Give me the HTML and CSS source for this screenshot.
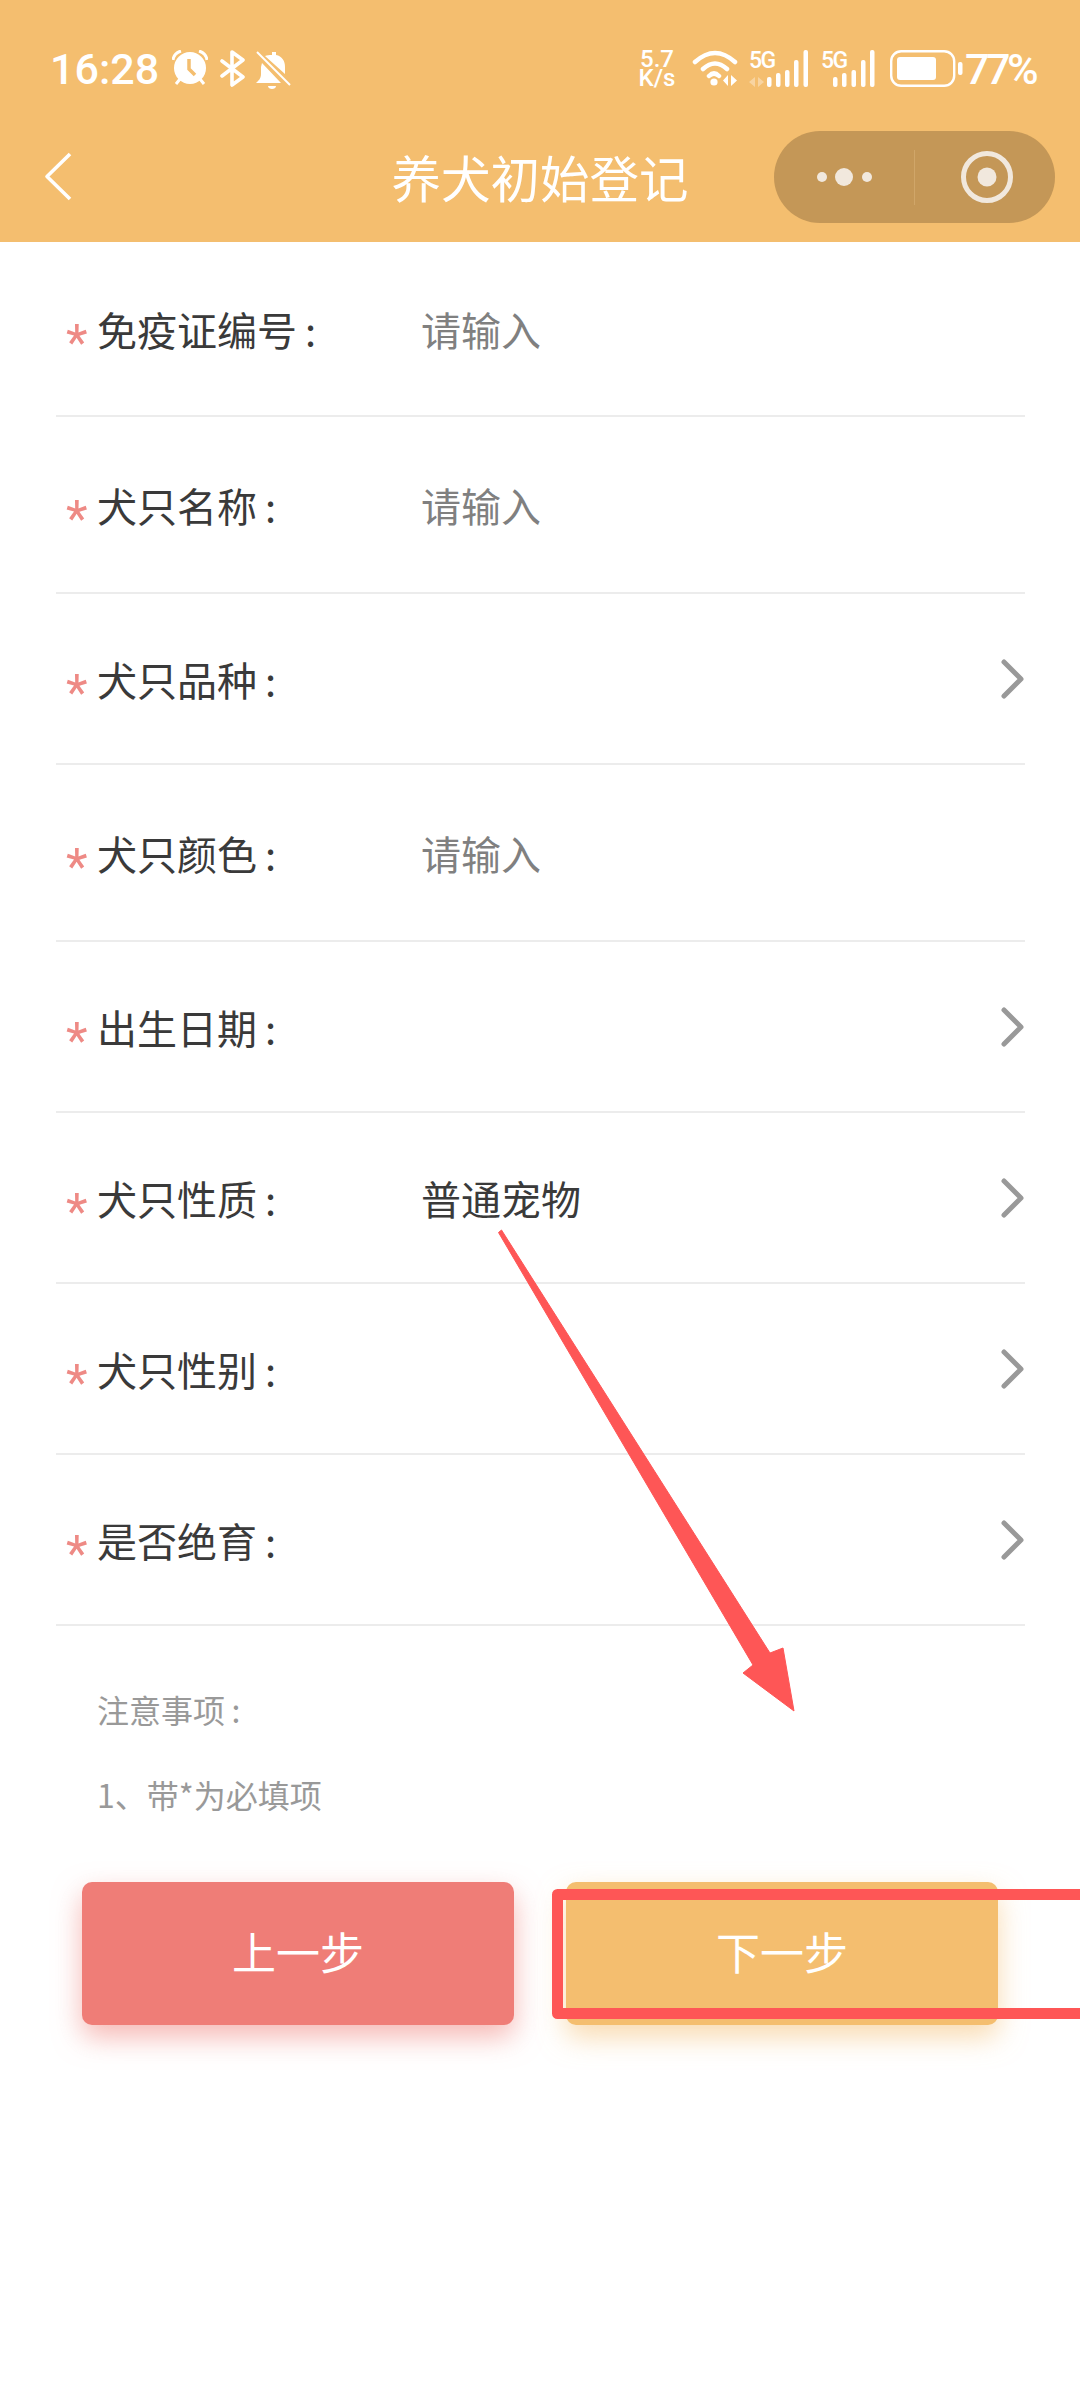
FILE: index.html
```html
<!DOCTYPE html>
<html lang="zh-CN">
<head>
    <meta charset="UTF-8">
    <meta name="viewport" content="width=device-width, initial-scale=1.0">
    <title>养犬初始登记</title>
    <link rel="stylesheet" href="styles.css">
</head>
<body>
    <header class="header">
        <div class="status-bar">
            <div class="status-left">
                <span class="time">16:28</span>
                <svg class="icon-alarm" width="36" height="36" viewBox="0 0 36 36">
                    <circle cx="18" cy="18" r="16" fill="#fff"/>
                    <path d="M17 9v10l6 6" fill="none" stroke="#f4be6f" stroke-width="3.5"/>
                    <path d="M1 10Q2 3 9 1M27 1Q34 3 35 10" fill="none" stroke="#fff" stroke-width="3"/>
                    <path d="M8 29l-4 5M28 29l4 5" stroke="#fff" stroke-width="3"/>
                </svg>
                <svg class="icon-bt" width="25" height="37" viewBox="0 0 25 37">
                    <path d="M2 11L23 27L12 35V2L23 10L2 26" fill="none" stroke="#fff" stroke-width="3.6" stroke-linejoin="round" stroke-linecap="round"/>
                </svg>
                <svg class="icon-bell" width="35" height="40" viewBox="0 0 35 40">
                    <path d="M16 2h4v3c6 1 9 6 9 12v7L9 6c2-1 4-1 7-1zM6 13l19 20H0c2-2 5-4 5-9v-7z" fill="#fff"/>
                    <path d="M12 36h8c0 4-8 4-8 0z" fill="#fff"/>
                    <path d="M1 2l33 33" stroke="#fff" stroke-width="2"/>
                </svg>
            </div>
            <div class="status-right">
                <div class="net-speed"><span>5.7</span><span>K/s</span></div>
                <svg class="icon-wifi" width="46" height="37" viewBox="0 0 46 37">
                    <path d="M3 12Q23 -6 43 12M11 19Q23 8 35 19M17 26Q22 21 27 26" fill="none" stroke="#fff" stroke-width="4.5" stroke-linecap="round"/>
                    <circle cx="22" cy="32" r="3.6" fill="#fff"/>
                    <path d="M36 25v11l-5-5.500zM39 25v11l6-5.500z" fill="#fff"/>
                </svg>
                <svg class="icon-sim icon-sim-one" width="60" height="45" viewBox="0 -8 60 45">
                    <text class="sim-label" x="0" y="18">5G</text>
                    <path d="M6 27v10l-6-5zM9 27v10l6-5z" fill="#fff" opacity="0.35"/>
                    <rect x="18" y="27" width="4.500" height="10" rx="2" fill="#fff"/>
                    <rect x="27" y="23" width="4.500" height="14" rx="2" fill="#fff"/>
                    <rect x="36" y="20" width="4.500" height="17" rx="2" fill="#fff"/>
                    <rect x="45" y="10" width="4.500" height="27" rx="2" fill="#fff"/>
                    <rect x="54.500" y="0" width="4.500" height="37" rx="2" fill="#fff"/>
                </svg>
                <svg class="icon-sim icon-sim-two" width="54" height="45" viewBox="0 -8 54 45">
                    <text class="sim-label" x="0" y="18">5G</text>
                    <rect x="12" y="27" width="4.500" height="10" rx="2" fill="#fff"/>
                    <rect x="21" y="23" width="4.500" height="14" rx="2" fill="#fff"/>
                    <rect x="30.500" y="20" width="4.500" height="17" rx="2" fill="#fff"/>
                    <rect x="40" y="10" width="4.500" height="27" rx="2" fill="#fff"/>
                    <rect x="49" y="0" width="4.500" height="37" rx="2" fill="#fff"/>
                </svg>
                <svg class="icon-battery" width="73" height="37" viewBox="0 0 73 37">
                    <rect x="1.200" y="1.200" width="63" height="34.600" rx="10" fill="none" stroke="#fff" stroke-width="2.400"/>
                    <rect x="7" y="7" width="39" height="23" rx="3" fill="#fff"/>
                    <rect x="68" y="12" width="4.500" height="13" rx="2" fill="#fff"/>
                </svg>
                <span class="battery-text">77%</span>
            </div>
        </div>
        <div class="nav-bar">
            <svg class="nav-back" width="30" height="50" viewBox="0 0 30 50">
                <path d="M26 2L3 24.500L26 47" fill="none" stroke="#fff" stroke-width="3.600" stroke-linejoin="round"/>
            </svg>
            <h1 class="nav-title">养犬初始登记</h1>
            <div class="capsule">
                <div class="capsule-part">
                    <svg width="60" height="20" viewBox="0 0 60 20">
                        <circle cx="8" cy="10" r="5" fill="#f1e8dd"/>
                        <circle cx="30" cy="10" r="9" fill="#f1e8dd"/>
                        <circle cx="53" cy="10" r="5" fill="#f1e8dd"/>
                    </svg>
                </div>
                <div class="capsule-line"></div>
                <div class="capsule-part capsule-right">
                    <svg width="54" height="54" viewBox="0 0 54 54">
                        <circle cx="27" cy="27" r="23.500" fill="none" stroke="#f1e8dd" stroke-width="5"/>
                        <circle cx="27" cy="27" r="9.500" fill="#f1e8dd"/>
                    </svg>
                </div>
            </div>
        </div>
    </header>

    <form class="form">
        <div class="form-row row-first">
            <span class="star">*</span>
            <label class="row-label">免疫证编号&#8201;:</label>
            <span class="row-hint">请输入</span>
        </div>
        <div class="form-row row-input">
            <span class="star">*</span>
            <label class="row-label">犬只名称&#8201;:</label>
            <span class="row-hint">请输入</span>
        </div>
        <div class="form-row">
            <span class="star">*</span>
            <label class="row-label">犬只品种&#8201;:</label>
            <svg class="row-arrow" width="24" height="42" viewBox="0 0 24 42"><path d="M3 4L20 21L3 38"/></svg>
        </div>
        <div class="form-row row-input">
            <span class="star">*</span>
            <label class="row-label">犬只颜色&#8201;:</label>
            <span class="row-hint">请输入</span>
        </div>
        <div class="form-row">
            <span class="star">*</span>
            <label class="row-label">出生日期&#8201;:</label>
            <svg class="row-arrow" width="24" height="42" viewBox="0 0 24 42"><path d="M3 4L20 21L3 38"/></svg>
        </div>
        <div class="form-row">
            <span class="star">*</span>
            <label class="row-label">犬只性质&#8201;:</label>
            <span class="row-value">普通宠物</span>
            <svg class="row-arrow" width="24" height="42" viewBox="0 0 24 42"><path d="M3 4L20 21L3 38"/></svg>
        </div>
        <div class="form-row">
            <span class="star">*</span>
            <label class="row-label">犬只性别&#8201;:</label>
            <svg class="row-arrow" width="24" height="42" viewBox="0 0 24 42"><path d="M3 4L20 21L3 38"/></svg>
        </div>
        <div class="form-row">
            <span class="star">*</span>
            <label class="row-label">是否绝育&#8201;:</label>
            <svg class="row-arrow" width="24" height="42" viewBox="0 0 24 42"><path d="M3 4L20 21L3 38"/></svg>
        </div>

        <div class="notes">
            <p>注意事项&#8201;:</p>
            <p>1、带*为必填项</p>
        </div>

        <div class="buttons">
            <button type="button" class="btn btn-prev">上一步</button>
            <button type="button" class="btn btn-next">下一步</button>
        </div>
    </form>

    <!-- red marks someone drew on top of the screenshot -->
    <svg class="marks" width="1080" height="2387" viewBox="0 0 1080 2387">
        <polygon points="498.500,1232.500 501.500,1230 770,1653 783,1648 794,1711 743,1673 753,1665" fill="#fe5656" stroke="#fe5656" stroke-width="1" stroke-linejoin="round"/>
        <path d="M1080 1894.500H557.500V2013.500H1080" fill="none" stroke="#fe5656" stroke-width="11" stroke-linejoin="round"/>
    </svg>
</body>
</html>
```

FILE: styles.css
```css
* {
    box-sizing: border-box;
}
body {
    margin: 0;
    width: 1080px;
    height: 2387px;
    overflow: hidden;
    background-color: #fff;
    font-family: "Noto Sans CJK SC", "Noto Sans", sans-serif;
    color: #3a3a3a;
    position: relative;
}
.header {
    height: 242px;
    background-color: #f4be6f;
    color: #fff;
}
.status-bar {
    height: 112px;
    padding: 50px 43px 0 50px;
    display: flex;
    justify-content: space-between;
    align-items: flex-start;
    font-family: Roboto, sans-serif;
}
.status-left {
    display: flex;
    align-items: flex-start;
}
.time {
    font-size: 43px;
    font-weight: 500;
    line-height: 38px;
    width: 122px;
}
.icon-bt {
    margin-left: 12px;
}
.icon-bell {
    margin-left: 11px;
}
.status-right {
    display: flex;
    align-items: flex-start;
}
.net-speed {
    width: 38px;
    margin-right: 16px;
    display: flex;
    flex-direction: column;
    align-items: center;
    font-size: 24px;
    font-weight: 500;
    line-height: 19px;
}
.icon-sim {
    margin-top: -8px;
}
.sim-label {
    font-family: Roboto, sans-serif;
    font-size: 23px;
    font-weight: 500;
    letter-spacing: -1.500px;
    fill: #fff;
}
.icon-sim-one {
    margin-left: 11px;
}
.icon-sim-two {
    margin-left: 12px;
}
.icon-battery {
    margin-left: 15px;
}
.battery-text {
    width: 72px;
    margin-left: 2px;
    font-size: 43px;
    font-weight: 500;
    line-height: 38px;
    letter-spacing: -3.500px;
}
.nav-bar {
    height: 130px;
    display: grid;
    grid-template-columns: 1fr auto 1fr;
    align-items: center;
}
.nav-back {
    margin-left: 44px;
}
.nav-title {
    margin: 0 0 2px;
    font-size: 49.500px;
    font-weight: 400;
}
.capsule {
    justify-self: end;
    margin-right: 25px;
    width: 281px;
    height: 92px;
    border-radius: 46px;
    background-color: #c49757;
    display: flex;
    align-items: center;
}
.capsule-part {
    width: 140px;
    display: flex;
    justify-content: center;
}
.capsule-right {
    padding-left: 4px;
}
.capsule-line {
    width: 1px;
    height: 55px;
    background-color: #d0a669;
}
.form-row {
    height: 171px;
    margin: 0 55px 0 56px;
    border-bottom: 2px solid #ececec;
    display: flex;
    align-items: center;
}
.row-first {
    height: 175px;
}
.row-input {
    height: 177px;
}
.star {
    width: 41px;
    padding: 28px 0 0 10px;
    font-family: Roboto, sans-serif;
    font-size: 50px;
    line-height: 50px;
    color: #ee8a85;
}
.row-label {
    width: 324px;
    font-size: 40px;
    line-height: 56px;
}
.row-hint, .row-value {
    font-size: 40px;
    line-height: 56px;
}
.row-hint {
    color: #808080;
}
.row-arrow {
    margin-left: auto;
    margin-right: 0;
}
.row-arrow path {
    fill: none;
    stroke: #999;
    stroke-width: 5;
    stroke-linecap: round;
    stroke-linejoin: round;
}
.notes {
    padding: 41px 97px 0;
    font-size: 32px;
    line-height: 85px;
    color: #999;
}
.notes p {
    margin: 0;
}
.buttons {
    margin-top: 45px;
    padding: 0 82px;
    display: flex;
    gap: 52px;
}
.btn {
    width: 432px;
    height: 143px;
    padding: 0 0 6px;
    border: none;
    border-radius: 10px;
    color: #fff;
    font-family: inherit;
    font-size: 44px;
}
.btn-prev {
    background-color: #ef7d77;
    box-shadow: 0 12px 28px rgba(239, 125, 119, 0.55);
}
.btn-next {
    background-color: #f4be6f;
    box-shadow: 0 12px 28px rgba(244, 190, 111, 0.55);
}
.marks {
    position: absolute;
    top: 0;
    left: 0;
}
```
